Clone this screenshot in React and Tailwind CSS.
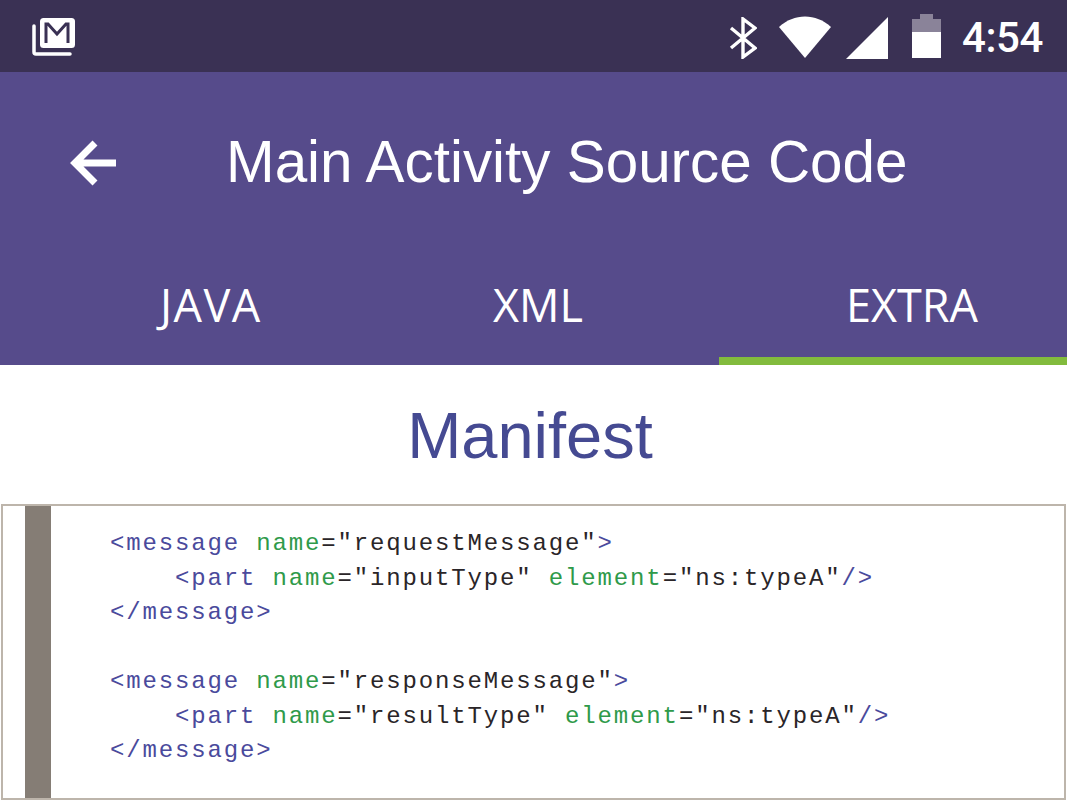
const Tag = ({ children }) => <span className="text-[#4a4a9c]">{children}</span>;
const Attr = ({ children }) => <span className="text-[#2f9a4a]">{children}</span>;
const Val = ({ children }) => <span className="text-[#2a2528]">{children}</span>;

const codeLines = [
  <div className="pl-[59px]" key="1"><Tag>&lt;message</Tag> <Attr>name</Attr><Val>="requestMessage"</Val><Tag>&gt;</Tag></div>,
  <div className="pl-[124px]" key="2"><Tag>&lt;part</Tag> <Attr>name</Attr><Val>="inputType"</Val> <Attr>element</Attr><Val>="ns:typeA"</Val><Tag>/&gt;</Tag></div>,
  <div className="pl-[59px]" key="3"><Tag>&lt;/message&gt;</Tag></div>,
  <div className="h-[34.5px]" key="4"></div>,
  <div className="pl-[59px]" key="5"><Tag>&lt;message</Tag> <Attr>name</Attr><Val>="responseMessage"</Val><Tag>&gt;</Tag></div>,
  <div className="pl-[124px]" key="6"><Tag>&lt;part</Tag> <Attr>name</Attr><Val>="resultType"</Val> <Attr>element</Attr><Val>="ns:typeA"</Val><Tag>/&gt;</Tag></div>,
  <div className="pl-[59px]" key="7"><Tag>&lt;/message&gt;</Tag></div>,
];

const App = () => {
  return (
    <div className="w-[1067px] h-[800px] overflow-hidden bg-white font-['Liberation_Sans',sans-serif]">
      {/* Status bar */}
      <div className="h-[72px] bg-[#3a3154] flex items-center justify-between pl-[32px] pr-[24px]">
        <svg width="44" height="40" viewBox="0 0 44 40" className="mb-[-1px]">
          <path d="M2 9v26a2 2 0 0 0 2 2h34" fill="none" stroke="#fff" strokeWidth="3.5" strokeLinecap="round" />
          <rect x="8" y="1" width="35" height="30" rx="3.5" fill="#fff" />
          <path d="M14 26V7h2l9 10 9-10h2v19" fill="none" stroke="#3a3154" strokeWidth="3" />
        </svg>
        <div className="flex items-center">
          <svg width="28" height="42" viewBox="0 0 28 42" className="mr-[22px] mt-[4px]">
            <path d="M2 11l24 20-12 9V2l12 9L2 31" fill="none" stroke="#fff" strokeWidth="3.4" />
          </svg>
          <svg width="52" height="42" viewBox="0 0 52 42" className="mr-[15px] mt-[1px]">
            <path d="M0 11C15-3 37-3 52 11L26 42z" fill="#fff" />
          </svg>
          <svg width="42" height="42" viewBox="0 0 42 42" className="mr-[24px] mt-[3px]">
            <path d="M0 42L42 0v42z" fill="#fff" />
          </svg>
          <svg width="29" height="44" viewBox="0 0 29 44" className="mr-[21px]">
            <path d="M0 44V5h8V0h13v5h8v39z" fill="#8a8399" />
            <path d="M0 44V18h29v26z" fill="#fff" />
          </svg>
          <span className="text-white text-[42px] leading-none font-['Roboto',sans-serif] font-medium tracking-[-0.4px] mt-[3px]">4:54</span>
        </div>
      </div>

      {/* App bar */}
      <div className="h-[293px] bg-[#564b8b] flex flex-col">
        <div className="h-[180px] flex items-center pl-[70px]">
          <svg width="46" height="46" viewBox="0 0 46 46" className="shrink-0 mt-[2px]">
            <path d="M46 23H6M25 3L5 23l20 20" fill="none" stroke="#fff" strokeWidth="7" />
          </svg>
          <h1 className="ml-[110px] text-white text-[58.4px] leading-none font-normal whitespace-nowrap">Main Activity Source Code</h1>
        </div>
        <div className="flex-1 flex font-['Open_Sans',sans-serif] text-white text-[45px] leading-none">
          <div className="w-[371px] pl-[160px] pt-[30px] tracking-[1.5px]">JAVA</div>
          <div className="w-[348px] pl-[122px] pt-[30px]">XML</div>
          <div className="w-[348px] pl-[127px] pt-[30px] border-b-[8px] border-[#82bb3d]">EXTRA</div>
        </div>
      </div>

      {/* Heading */}
      <h2 className="h-[139px] pt-[38px] text-center text-[#454a92] text-[65px] leading-none font-normal pr-[7px]">Manifest</h2>

      {/* Code block */}
      <div className="ml-[1px] w-[1065px] h-[296px] border-2 border-[#bdb5ab] flex">
        <div className="ml-[22px] w-[26px] bg-[#857d75]"></div>
        <div className="pt-[21px] font-['Liberation_Mono',monospace] text-[24px] leading-[34.5px] tracking-[1.85px] whitespace-pre">
          {codeLines}
        </div>
      </div>
    </div>
  );
};

export default App;
